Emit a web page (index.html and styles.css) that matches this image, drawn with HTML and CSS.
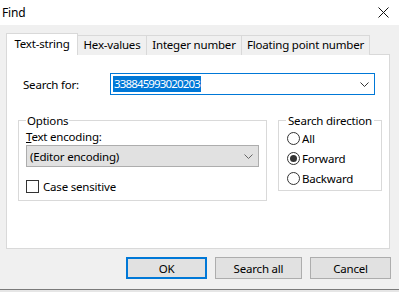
FILE: index.html
```html
<!DOCTYPE html>
<html lang="en">
<head>
  <meta charset="UTF-8" />
  <title>Find</title>
  <link rel="stylesheet" href="styles.css">
</head>
<body>

  <div class="window">
    <!-- Title bar -->
    <div class="titlebar">
      <span class="title">Find</span>
      <svg class="close" width="11" height="11" viewBox="0 0 11 11">
        <path d="M0.5 0.5 L10.5 10.5 M10.5 0.5 L0.5 10.5" stroke="#111" stroke-width="1" fill="none"/>
      </svg>
    </div>

    <div class="content">
      <!-- Tabs -->
      <div class="tabs">
        <div class="tab active">Text-string</div>
        <div class="tab tab-hex">Hex-values</div>
        <div class="tab tab-int">Integer number</div>
        <div class="tab tab-float">Floating point number</div>
      </div>

      <div class="panel">
        <div class="search-row">
          <label class="search-label">Search for:</label>
          <div class="combo">
            <span class="selected-text">338845993020203</span>
            <svg class="chevron" width="9" height="5" viewBox="0 0 9 5">
              <path d="M0.5 0.5 L4.5 4.5 L8.5 0.5" stroke="#333" stroke-width="1" fill="none"/>
            </svg>
          </div>
        </div>

        <div class="groups">
          <fieldset class="group options">
            <legend>Options</legend>
            <div class="field-label"><u>T</u>ext encoding:</div>
            <div class="select">
              <span>(Editor encoding)</span>
              <svg class="chevron" width="9" height="5" viewBox="0 0 9 5">
                <path d="M0.5 0.5 L4.5 4.5 L8.5 0.5" stroke="#666" stroke-width="1" fill="none"/>
              </svg>
            </div>
            <div class="check-row">
              <span class="checkbox"></span>
              <span>Case sensitive</span>
            </div>
          </fieldset>

          <fieldset class="group direction">
            <legend>Search direction</legend>
            <div class="radio-row"><span class="radio"></span>All</div>
            <div class="radio-row"><span class="radio checked"></span>Forward</div>
            <div class="radio-row"><span class="radio"></span>Backward</div>
          </fieldset>
        </div>
      </div>

      <!-- Dialog buttons -->
      <div class="buttons">
        <button class="btn btn-ok">OK</button>
        <button class="btn btn-all">Search all</button>
        <button class="btn btn-cancel">Cancel</button>
      </div>
    </div>

    <div class="bottom-edge"></div>
  </div>

</body>
</html>
```

FILE: styles.css
```css
:root {
  --face: #f0f0f0;
  --line: #d9d9d9;
  --accent: #0078d7;
  --btn: #e1e1e1;
  --btn-border: #adadad;
  --text: #000000;
}

* {
  margin: 0;
  padding: 0;
  box-sizing: border-box;
}

html,
body {
  width: 399px;
  height: 292px;
  overflow: hidden;
  font-family: 'Noto Sans', 'Open Sans', sans-serif;
  font-size: 11.5px;
  letter-spacing: -0.2px;
  color: var(--text);
  background: var(--face);
  white-space: nowrap;
}

.window {
  display: flex;
  flex-direction: column;
  height: 292px;
}

.titlebar {
  height: 25px;
  background: #ffffff;
  display: flex;
  align-items: center;
  justify-content: space-between;
  padding: 0 10px 1px 2px;
}

.title {
  font-size: 12px;
}

.close {
  display: block;
  margin-top: 1px;
}

.content {
  flex: 1;
  padding: 8px 8px 0 6px;
  display: flex;
  flex-direction: column;
}

/* Tabs */
.tabs {
  display: flex;
  align-items: flex-end;
  height: 22px;
  margin-bottom: -1px;
  position: relative;
  z-index: 1;
}

.tab {
  height: 20px;
  border: 1px solid var(--line);
  border-bottom: none;
  background: var(--face);
  display: flex;
  align-items: center;
  justify-content: center;
  margin-left: -1px;
  line-height: 1;
  padding-bottom: 1px;
}

.tab.active {
  height: 22px;
  width: 72px;
  margin-left: 0;
  background: #ffffff;
  padding-bottom: 2px;
}

.tab-hex {
  width: 70px;
}

.tab-int {
  width: 96px;
}

.tab-float {
  width: 129px;
}

.panel {
  height: 195px;
  width: 384px;
  background: #ffffff;
  border: 1px solid var(--line);
  padding: 18px 0 0 11px;
}

/* Search field */
.search-row {
  display: flex;
  align-items: center;
  height: 22px;
}

.search-label {
  width: 92px;
  padding-left: 5px;
}

.combo {
  width: 265px;
  height: 22px;
  border: 1px solid var(--accent);
  display: flex;
  align-items: center;
  justify-content: space-between;
  padding: 0 5px 0 2px;
}

.selected-text {
  background: var(--accent);
  color: #ffffff;
  height: 16px;
  line-height: 16px;
  padding: 0 1px;
  letter-spacing: -0.85px;
}

/* Group boxes */
.groups {
  display: flex;
  gap: 11px;
  margin-top: 18px;
  align-items: flex-start;
}

.group {
  border: 1px solid var(--line);
  padding: 0 7px;
}

.group legend {
  padding: 0 1px;
  line-height: 15px;
}

.options {
  width: 248px;
  height: 88px;
}

.direction {
  width: 98px;
  height: 78px;
  padding-left: 7px;
}

.direction legend {
  padding: 0 2px;
}

.field-label {
  margin-top: 1px;
  line-height: 15px;
}

.select {
  margin-top: 1px;
  width: 233px;
  height: 22px;
  background: var(--btn);
  border: 1px solid var(--btn-border);
  display: flex;
  align-items: center;
  justify-content: space-between;
  padding: 0 5px 0 3px;
}

.check-row {
  display: flex;
  align-items: center;
  gap: 4px;
  margin-top: 12px;
}

.checkbox {
  width: 13px;
  height: 13px;
  border: 1px solid #333333;
  background: #ffffff;
}

.radio-row {
  display: flex;
  align-items: center;
  gap: 2px;
  height: 20px;
  margin-left: 1px;
}

.radio {
  width: 13px;
  height: 13px;
  border: 1px solid #333333;
  border-radius: 50%;
  background: #ffffff;
  display: flex;
  align-items: center;
  justify-content: center;
}

.radio.checked::after {
  content: "";
  width: 7px;
  height: 7px;
  border-radius: 50%;
  background: #333333;
}

/* Buttons */
.buttons {
  display: flex;
  justify-content: flex-end;
  gap: 8px;
  margin-top: 8px;
}

.btn {
  height: 22px;
  background: var(--btn);
  border: 1px solid var(--btn-border);
  font-family: inherit;
  font-size: 11.5px;
  letter-spacing: -0.2px;
  color: var(--text);
}

.btn-ok {
  width: 81px;
  border: 2px solid var(--accent);
}

.btn-all {
  width: 87px;
}

.btn-cancel {
  width: 81px;
}

.bottom-edge {
  height: 3px;
  border-top: 1px solid #7a7a7a;
  background: #e6e6e6;
}
```
